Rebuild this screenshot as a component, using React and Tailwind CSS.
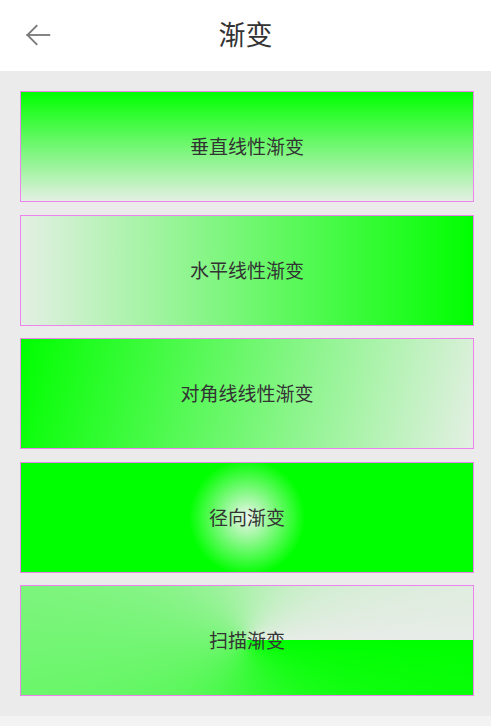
export default function App() {
  const font = { fontFamily: '"Noto Sans CJK SC", "Noto Sans", sans-serif' };
  const cards = [
    { label: "垂直线性渐变", cls: "bg-[linear-gradient(to_bottom,#00ff00,#e4efe4)]" },
    { label: "水平线性渐变", cls: "bg-[linear-gradient(to_left,#00ff00,#e4efe4)]" },
    { label: "对角线线性渐变", cls: "bg-[linear-gradient(103.7deg,#00ff00,#e4efe4)]" },
    { label: "径向渐变", cls: "bg-[radial-gradient(circle_at_50%_50%,#f0f4f0_0px,#00ff00_58px)]" },
    { label: "扫描渐变", cls: "bg-[conic-gradient(from_90deg_at_50%_50%,#00ff00,#e8ece8)]" },
  ];
  return (
    <div className="w-[491px] h-[726px] flex flex-col bg-[#ebebeb]" style={font}>
      <div className="h-[71px] bg-white flex items-center relative shrink-0">
        <div className="pl-[21px] pb-[2px] flex items-center">
          <svg width="34" height="34" viewBox="0 0 24 24" fill="none" stroke="#7a7a7a" strokeWidth="1.3" strokeLinecap="square">
            <path d="M20 12H4.5" />
            <path d="M11 5.5L4.5 12L11 18.5" />
          </svg>
        </div>
        <div className="absolute left-0 right-0 top-0 bottom-0 flex items-center justify-center pb-[3px] text-[27px] text-[#333333] pointer-events-none">渐变</div>
      </div>
      <div className="flex-1 flex flex-col gap-[12.5px] pl-[20px] pr-[17px] pt-[20px]">
        {cards.map((c) => (
          <div
            key={c.label}
            className={`h-[111px] border border-[#ee82ee] flex items-center justify-center text-[19px] text-[#333333] ${c.cls}`}
          >
            {c.label}
          </div>
        ))}
      </div>
      <div className="h-[10px] bg-[#f3f3f3] shrink-0" />
    </div>
  );
}
